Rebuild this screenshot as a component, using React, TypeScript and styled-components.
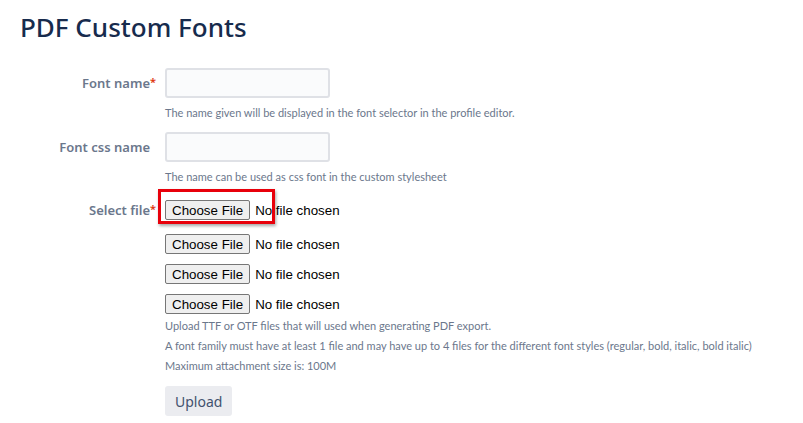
import React from 'react';
import styled, { createGlobalStyle } from 'styled-components';

const GlobalStyle = createGlobalStyle`
  html, body {
    margin: 0;
    padding: 0;
    background: #fff;
  }
  body {
    font-family: "Noto Sans", "Liberation Sans", sans-serif;
    color: #172b4d;
  }
`;

const Page = styled.div`
  padding: 9px 20px 0 20px;
`;

const Title = styled.h1`
  margin: 0 0 23px 0;
  font-size: 26px;
  font-weight: 500;
  line-height: 36px;
  color: #172b4d;
`;

const Form = styled.form`
  display: flex;
  flex-direction: column;
`;

const Row = styled.div<{ gap?: number }>`
  display: grid;
  grid-template-columns: 130px 1fr;
  column-gap: 15px;
  margin-bottom: ${(p) => p.gap ?? 0}px;
`;

const Label = styled.label<{ top?: number }>`
  position: relative;
  text-align: right;
  font-size: 13px;
  font-weight: 600;
  color: #6b778c;
  padding-top: ${(p) => p.top ?? 0}px;
  line-height: 20px;
`;

const Required = styled.span`
  position: absolute;
  color: #de350b;
  font-size: 11px;
  line-height: 18px;
`;

const Field = styled.div`
  display: flex;
  flex-direction: column;
  align-items: flex-start;
`;

const TextInput = styled.input`
  box-sizing: border-box;
  width: 165px;
  height: 30px;
  border: 2px solid #dfe1e6;
  border-radius: 3px;
  background: #fafbfc;
  font-family: inherit;
  font-size: 14px;
  padding: 0 6px;
  outline: none;
`;

const Help = styled.div<{ top?: number }>`
  font-family: Lato, "Noto Sans", sans-serif;
  font-size: 11px;
  line-height: 20px;
  white-space: nowrap;
  color: #6b778c;
  margin-top: ${(p) => p.top ?? 0}px;
`;

const FileWrap = styled.div<{ gap?: number }>`
  position: relative;
  display: flex;
  margin-bottom: ${(p) => p.gap ?? 10}px;
`;

const FileInput = styled.input`
  display: block;
  font-family: "Liberation Sans", Arial, sans-serif;
  font-size: 13.33px;
  line-height: 20px;
  color: #000;
  height: 20px;
  margin: 0;
  &::file-selector-button {
    font-family: "Liberation Sans", Arial, sans-serif;
    font-size: 13.33px;
    height: 20px;
    padding: 0 6px;
    margin: 0 5px 0 0;
    border: 1px solid #767676;
    border-radius: 2px;
    background: #efefef;
    color: #000;
  }
`;

const Highlight = styled.span`
  position: absolute;
  box-sizing: border-box;
  left: -7px;
  top: -11px;
  width: 117px;
  height: 35px;
  border: 3px solid #e8000b;
  box-shadow: 1px 2px 3px rgba(0, 0, 0, 0.35);
  pointer-events: none;
`;

const UploadButton = styled.button`
  margin-top: 10px;
  height: 30px;
  padding: 0 10px;
  border: none;
  border-radius: 3px;
  background: #ebecf0;
  color: #42526e;
  font-family: inherit;
  font-size: 14px;
`;

export default function App() {
  return (
    <Page>
      <GlobalStyle />
      <Title>PDF Custom Fonts</Title>
      <Form onSubmit={(e) => e.preventDefault()}>
        <Row gap={9}>
          <Label top={5}>
            Font name<Required>*</Required>
          </Label>
          <Field>
            <TextInput type="text" />
            <Help top={5}>The name given will be displayed in the font selector in the profile editor.</Help>
          </Field>
        </Row>
        <Row gap={13}>
          <Label top={5}>Font css name</Label>
          <Field>
            <TextInput type="text" />
            <Help top={5}>The name can be used as css font in the custom stylesheet</Help>
          </Field>
        </Row>
        <Row>
          <Label>
            Select file<Required>*</Required>
          </Label>
          <Field>
            <FileWrap gap={14}>
              <FileInput type="file" />
              <Highlight />
            </FileWrap>
            <FileWrap>
              <FileInput type="file" />
            </FileWrap>
            <FileWrap>
              <FileInput type="file" />
            </FileWrap>
            <FileWrap gap={2}>
              <FileInput type="file" />
            </FileWrap>
            <Help>Upload TTF or OTF files that will used when generating PDF export.</Help>
            <Help>A font family must have at least 1 file and may have up to 4 files for the different font styles (regular, bold, italic, bold italic)</Help>
            <Help>Maximum attachment size is: 100M</Help>
            <UploadButton type="submit">Upload</UploadButton>
          </Field>
        </Row>
      </Form>
    </Page>
  );
}
